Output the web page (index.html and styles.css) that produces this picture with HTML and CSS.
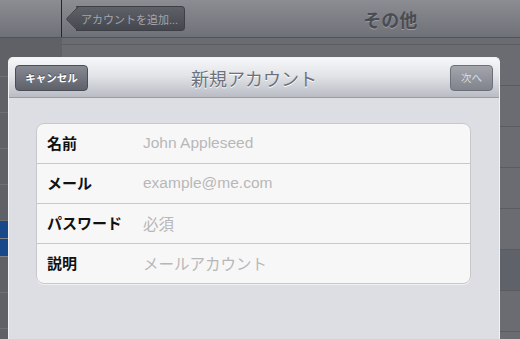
FILE: index.html
```html
<!DOCTYPE html>
<html lang="ja">
<head>
  <meta charset="UTF-8" />
  <title>新規アカウント</title>
  <link rel="stylesheet" href="styles.css">
</head>
<body>
  <div class="screen">
    <div class="topbar">
      <div class="topbar-left"></div>
      <div class="topbar-right">
        <span class="back-btn">アカウントを追加...</span>
        <span class="topbar-title">その他</span>
      </div>
    </div>

    <div class="columns">
      <div class="master">
        <div class="master-row"></div>
        <div class="master-row"></div>
        <div class="master-row"></div>
        <div class="master-row"></div>
        <div class="master-row"></div>
        <div class="master-row selected"></div>
        <div class="master-row selected"></div>
        <div class="master-row"></div>
        <div class="master-row"></div>
      </div>
      <div class="detail">
        <div class="detail-row"></div>
        <div class="detail-row"></div>
        <div class="detail-row"></div>
        <div class="detail-row"></div>
        <div class="detail-row"></div>
        <div class="detail-row"></div>
        <div class="detail-row dark"></div>
        <div class="detail-row"></div>
      </div>
    </div>

    <div class="sheet">
      <div class="sheet-header">
        <button class="btn btn-cancel">キャンセル</button>
        <span class="sheet-title">新規アカウント</span>
        <button class="btn btn-next">次へ</button>
      </div>
      <div class="sheet-body">
        <div class="form-group">
          <div class="form-row">
            <span class="form-label">名前</span>
            <span class="form-value">John Appleseed</span>
          </div>
          <div class="form-row">
            <span class="form-label">メール</span>
            <span class="form-value">example@me.com</span>
          </div>
          <div class="form-row">
            <span class="form-label">パスワード</span>
            <span class="form-value">必須</span>
          </div>
          <div class="form-row">
            <span class="form-label">説明</span>
            <span class="form-value">メールアカウント</span>
          </div>
        </div>
      </div>
    </div>
  </div>
</body>
</html>
```

FILE: styles.css
```css
:root {
  --jp-font: "Liberation Sans", "Noto Sans CJK JP", sans-serif;
  --sheet-bg: #dcdee3;
  --row-bg: #f7f7f7;
  --row-line: #c8c8ca;
}

* {
  box-sizing: border-box;
}

body {
  margin: 0;
  font-family: var(--jp-font);
  background-color: #606269;
}

.screen {
  position: relative;
  width: 520px;
  height: 339px;
  overflow: hidden;
}

/* background split view */
.topbar {
  display: flex;
  height: 38px;
  background: linear-gradient(#8b8d93, #6f7178);
  border-bottom: 1px solid #50535a;
}

.topbar-left {
  width: 62px;
  border-right: 1px solid #24262a;
}

.topbar-right {
  flex: 1;
  display: flex;
  align-items: center;
  padding-left: 6px;
}

.back-btn {
  position: relative;
  z-index: 0;
  margin-left: 8px;
  height: 25px;
  padding: 0 6px 0 5px;
  display: flex;
  align-items: center;
  font-size: 11px;
  color: #a3a5ab;
  background: linear-gradient(#5f6168, #45474e);
  border: 1px solid #3e4046;
  border-left: none;
  border-radius: 0 4px 4px 0;
}

.back-btn::before {
  content: "";
  position: absolute;
  left: -7px;
  top: 3px;
  width: 17px;
  height: 17px;
  transform: rotate(45deg);
  background: linear-gradient(135deg, #5f6168, #45474e);
  border-left: 1px solid #3e4046;
  border-bottom: 1px solid #3e4046;
  border-radius: 0 0 0 3px;
  z-index: -1;
}

.topbar-title {
  margin-left: 178px;
  font-size: 18px;
  font-weight: bold;
  color: #4a4c53;
  text-shadow: 0 1px 0 #9a9ca1;
}

.columns {
  display: flex;
  height: 301px;
}

.master {
  width: 62px;
  background-color: #5f6167;
}

.master-row {
  height: 36px;
  border-bottom: 1px solid #6e7076;
}

.master-row:first-child {
  height: 39px;
}

.master-row.selected {
  height: 18px;
  background-color: #17488a;
  border-bottom: 1px solid #808288;
}

.detail {
  flex: 1;
  background-color: #6a6c72;
}

.detail-row {
  height: 41px;
  border-bottom: 1px solid #5a5c62;
}

.detail-row:first-child {
  height: 7px;
}

.detail-row.dark {
  background-color: #5f6268;
}

/* modal sheet */
.sheet {
  position: absolute;
  left: 8px;
  top: 57px;
  width: 492px;
  height: 290px;
  border-radius: 5px 5px 0 0;
  background-color: var(--sheet-bg);
  border: 1px solid #f2f3f5;
  border-bottom: none;
  overflow: hidden;
}

.sheet-header {
  position: relative;
  height: 40px;
  display: flex;
  align-items: center;
  justify-content: space-between;
  padding: 0 6px;
  background: linear-gradient(#f6f7f9, #e2e4e8 45%, #b9bcc4);
  border-bottom: 1px solid #9a9da4;
}

.sheet-title {
  position: absolute;
  left: 0;
  right: 0;
  text-align: center;
  font-size: 18px;
  color: #6e7179;
  text-shadow: 0 1px 0 #ffffff;
  pointer-events: none;
}

.btn {
  position: relative;
  z-index: 1;
  height: 26px;
  padding: 0 6px;
  font-family: var(--jp-font);
  font-size: 10.5px;
  border-radius: 4px;
}

.btn-cancel {
  width: 73px;
  font-weight: bold;
  color: #ffffff;
  background: linear-gradient(#868992, #5e616a);
  border: 1px solid #4b4e56;
  text-shadow: 0 -1px 0 #4a4d55;
}

.btn-next {
  width: 43px;
  color: #dcdde0;
  background: linear-gradient(#a3a6ad, #80838b);
  border: 1px solid #6d7078;
}

.sheet-body {
  padding: 25px 28px 0 27px;
}

.form-group {
  background-color: var(--row-bg);
  border: 1px solid var(--row-line);
  border-radius: 8px;
  box-shadow: 0 1px 0 #eef0f2;
}

.form-row {
  display: flex;
  align-items: center;
  height: 40px;
  padding-left: 10px;
  padding-bottom: 2px;
  border-bottom: 1px solid var(--row-line);
}

.form-row:last-child {
  border-bottom: none;
  height: 39px;
}

.form-label {
  width: 96px;
  font-size: 15px;
  font-weight: bold;
  color: #111111;
}

.form-value {
  font-size: 15.5px;
  color: #b7b7b9;
}
```
